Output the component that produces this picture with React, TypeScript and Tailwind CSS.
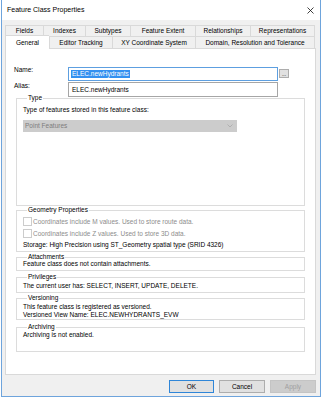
import React from "react";

const topTabs = [
  { label: "Fields", w: "w-[38px]" },
  { label: "Indexes", w: "w-[42px]" },
  { label: "Subtypes", w: "w-[45px]" },
  { label: "Feature Extent", w: "w-[65px]" },
  { label: "Relationships", w: "w-[55px]" },
  { label: "Representations", w: "w-[65px]" },
];

const frontTabs = [
  { label: "General", w: "w-[44px]", active: true },
  { label: "Editor Tracking", w: "w-[63px]" },
  { label: "XY Coordinate System", w: "w-[83px]" },
  { label: "Domain, Resolution and Tolerance", w: "w-[120px]" },
];

const Group = ({
  title,
  className,
  children,
}: {
  title: string;
  className?: string;
  children: React.ReactNode;
}) => (
  <fieldset className={`mx-[10px] border border-[#dcdcdc] px-[6px] ${className ?? ""}`}>
    <legend className="ml-[4px] px-[1px] leading-[8px]">{title}</legend>
    {children}
  </fieldset>
);

const Checkbox = ({ label }: { label: string }) => (
  <div className="flex h-[9px] items-center gap-[1px] text-[#8c8c8c]">
    <span className="h-[9px] w-[9px] border border-[#cccccc] bg-white" />
    <span>{label}</span>
  </div>
);

export default function App() {
  return (
    <div className="h-[400px] w-[323px] overflow-hidden bg-white font-['Liberation_Sans',Arial,sans-serif] text-[6.5px] leading-[8px] text-black">
      <div className="ml-px flex h-[397px] w-[320px] flex-col border-x border-b border-[#6ea4dc]">
        {/* title bar */}
        <div className="flex h-[20px] shrink-0 items-center justify-between bg-white pl-[5px] pr-[5px]">
          <span className="text-[7px]">Feature Class Properties</span>
          <svg width="7" height="7" viewBox="0 0 7 7" className="mr-[1px]">
            <path d="M0.5 0.5L6.5 6.5M6.5 0.5L0.5 6.5" stroke="#111" strokeWidth="0.8" />
          </svg>
        </div>

        <div className="flex flex-1 flex-col bg-[#f0f0f0] px-[3px] pt-[5px]">
          {/* tabs */}
          <div className="flex h-[11px]">
            {topTabs.map((t, i) => (
              <div
                key={t.label}
                className={`${t.w} flex items-center justify-center border-l border-t border-[#d9d9d9] ${
                  i === topTabs.length - 1 ? "border-r" : ""
                }`}
              >
                {t.label}
              </div>
            ))}
          </div>
          <div className="relative z-10 flex h-[12px] items-start">
            {frontTabs.map((t, i) => (
              <div
                key={t.label}
                className={`${t.w} flex items-center justify-center border-l border-t border-[#d9d9d9] ${
                  i === frontTabs.length - 1 ? "border-r" : ""
                } ${t.active ? "relative z-10 -mt-px h-[14px] bg-white" : "h-[12px]"}`}
              >
                {t.label}
              </div>
            ))}
          </div>

          {/* panel */}
          <div className="mr-px h-[327px] border border-[#d9d9d9] bg-white">
            <div className="mt-[18px] flex h-[14px] items-start">
              <span className="w-[62px] pl-[8px] leading-[6px]">Name:</span>
              <div className="flex h-[14px] w-[210px] items-center border border-[#5d9fe0] px-[2px]">
                <span className="bg-[#3390f0] px-[1px] text-white">ELEC.newHydrants</span>
              </div>
              <div className="ml-px mt-[2px] flex h-[9px] w-[10px] items-end justify-center border border-[#adadad] bg-[#e1e1e1] text-[5px] leading-[5px]">
                ...
              </div>
            </div>
            <div className="mt-px flex h-[15px] items-start">
              <span className="w-[62px] pl-[8px] leading-[8px]">Alias:</span>
              <div className="flex h-[15px] w-[210px] items-center border border-[#a6a6a6] px-[3px]">
                ELEC.newHydrants
              </div>
            </div>

            <Group title="Type" className="-mt-[3px] pb-[73px]">
              <div className="mt-[4px]">Type of features stored in this feature class:</div>
              <div className="mt-[6px] flex h-[12px] w-[214px] items-center justify-between bg-[#cccccc] px-[2px] text-[#7d7d7d]">
                <span>Point Features</span>
                <svg width="6" height="4" viewBox="0 0 6 4" className="mr-[2px]">
                  <path d="M0.5 0.5L3 3L5.5 0.5" fill="none" stroke="#a8a8a8" strokeWidth="0.8" />
                </svg>
              </div>
            </Group>

            <Group title="Geometry Properties" className="pb-[2px]">
              <div className="mt-[3px]">
                <Checkbox label="Coordinates include M values. Used to store route data." />
              </div>
              <div className="mt-[3px]">
                <Checkbox label="Coordinates include Z values. Used to store 3D data." />
              </div>
              <div className="mt-[3px]">Storage: High Precision using ST_Geometry spatial type (SRID 4326)</div>
            </Group>

            <Group title="Attachments" className="mt-px pb-[2px]">
              <div className="-mt-px">Feature class does not contain attachments.</div>
            </Group>

            <Group title="Privileges" className="mt-[2px] pb-[2px]">
              <div className="mt-px">The current user has: SELECT, INSERT, UPDATE, DELETE.</div>
            </Group>

            <Group title="Versioning" className="mt-px">
              <div className="mt-px">This feature class is registered as versioned.</div>
              <div>Versioned View Name: ELEC.NEWHYDRANTS_EVW</div>
            </Group>

            <Group title="Archiving" className="mt-[3px] pb-[12px]">
              <div>Archiving is not enabled.</div>
            </Group>
          </div>

          {/* buttons */}
          <div className="mr-px mt-[5px] flex justify-end gap-[5px]">
            <button className="h-[13px] w-[45px] border border-[#2f86d8] bg-[#e1e1e1] leading-[8px]">OK</button>
            <button className="h-[13px] w-[46px] border border-[#adadad] bg-[#e1e1e1] leading-[8px]">Cancel</button>
            <button className="h-[13px] w-[46px] border border-[#c4c4c4] bg-[#cccccc] leading-[8px] text-[#a0a0a0]">
              Apply
            </button>
          </div>
        </div>
      </div>
    </div>
  );
}
